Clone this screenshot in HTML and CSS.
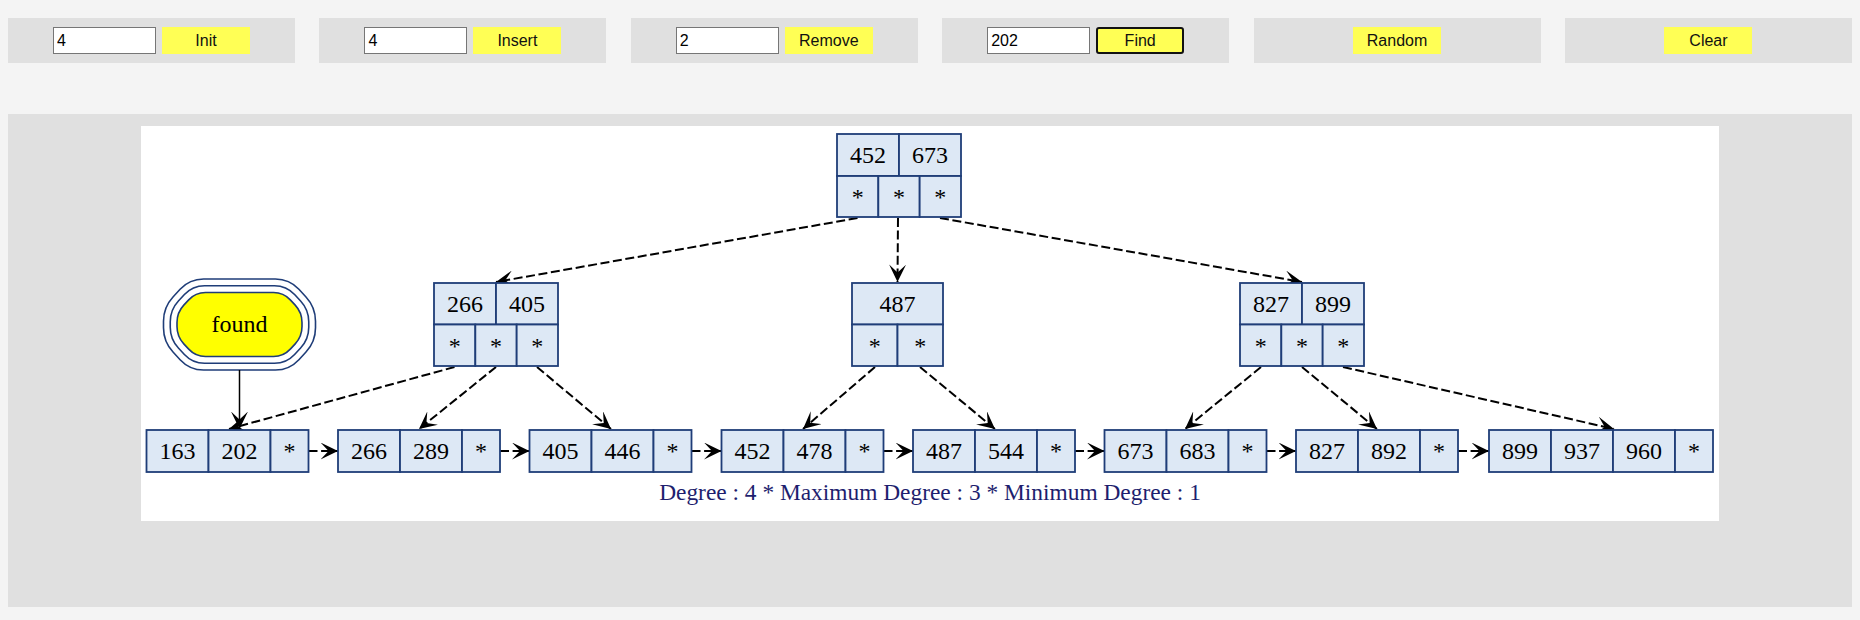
FILE: index.html
```html
<!DOCTYPE html>
<html lang="en">
<head>
    <meta charset="UTF-8">
    <meta name="viewport" content="width=device-width, initial-scale=1.0">
    <title>B+ Tree</title>
    <link rel="stylesheet" href="styles.css">
</head>
<body>

    <div class="toolbar">
        <div class="panel">
            <input type="text" value="4">
            <button>Init</button>
        </div>
        <div class="panel">
            <input type="text" value="4">
            <button>Insert</button>
        </div>
        <div class="panel">
            <input type="text" value="2">
            <button>Remove</button>
        </div>
        <div class="panel">
            <input type="text" value="202">
            <button class="active">Find</button>
        </div>
        <div class="panel">
            <button>Random</button>
        </div>
        <div class="panel">
            <button>Clear</button>
        </div>
    </div>

    <div class="stage">
        <svg class="graph" width="1578" height="395" viewBox="141 126 1578 395">
            <defs>
                <marker id="vee" markerUnits="userSpaceOnUse" markerWidth="18" markerHeight="17" viewBox="0 0 18 17" refX="17.5" refY="8.5" orient="auto">
                    <path d="M0 0 L17.5 8.5 L0 17 L8 8.5 Z" fill="#000"/>
                </marker>
            </defs>

            <!-- edges: root -> inner nodes -->
            <path class="edge" d="M857.5 218 L496 282"/>
            <path class="edge" d="M898 218 L897.5 282"/>
            <path class="edge" d="M940 218 L1302 282"/>

            <!-- edges: inner nodes -> leaves -->
            <path class="edge" d="M454.5 367 L229 429"/>
            <path class="edge" d="M496 367 L419 429"/>
            <path class="edge" d="M537 367 L611 429"/>
            <path class="edge" d="M875 367 L803 429"/>
            <path class="edge" d="M920 367 L995 429"/>
            <path class="edge" d="M1261 367 L1185 429"/>
            <path class="edge" d="M1302 367 L1377 429"/>
            <path class="edge" d="M1343 367 L1614 429"/>

            <!-- edges: leaf chain -->
            <path class="edge" d="M308.5 451 L338 451"/>
            <path class="edge" d="M500 451 L529.5 451"/>
            <path class="edge" d="M691.5 451 L721.5 451"/>
            <path class="edge" d="M883.5 451 L913 451"/>
            <path class="edge" d="M1075 451 L1104.5 451"/>
            <path class="edge" d="M1266.5 451 L1296 451"/>
            <path class="edge" d="M1458 451 L1489 451"/>

            <!-- found marker -->
            <g class="found" transform="translate(239.5 324.5)">
                <path d="M-35.9,-45.5 L35.9,-45.5 Q49.9,-45.5 59.41,-35.22 L66.49,-27.57 Q76,-17.29 76,-3.29 L76,3.29 Q76,17.29 66.49,27.57 L59.41,35.22 Q49.9,45.5 35.9,45.5 L-35.9,45.5 Q-49.9,45.5 -59.41,35.22 L-66.49,27.57 Q-76,17.29 -76,3.29 L-76,-3.29 Q-76,-17.29 -66.49,-27.57 L-59.41,-35.22 Q-49.9,-45.5 -35.9,-45.5 Z"/>
                <path d="M-34.94,-38.75 L34.94,-38.75 Q46.94,-38.75 55.09,-29.94 L61.1,-23.44 Q69.25,-14.63 69.25,-2.63 L69.25,2.63 Q69.25,14.63 61.1,23.44 L55.09,29.94 Q46.94,38.75 34.94,38.75 L-34.94,38.75 Q-46.94,38.75 -55.09,29.94 L-61.1,23.44 Q-69.25,14.63 -69.25,2.63 L-69.25,-2.63 Q-69.25,-14.63 -61.1,-23.44 L-55.09,-29.94 Q-46.94,-38.75 -34.94,-38.75 Z"/>
                <path class="hit" d="M-34,-32 L34,-32 Q44,-32 50.79,-24.66 L55.71,-19.34 Q62.5,-12 62.5,-2 L62.5,2 Q62.5,12 55.71,19.34 L50.79,24.66 Q44,32 34,32 L-34,32 Q-44,32 -50.79,24.66 L-55.71,19.34 Q-62.5,12 -62.5,2 L-62.5,-2 Q-62.5,-12 -55.71,-19.34 L-50.79,-24.66 Q-44,-32 -34,-32 Z"/>
                <text x="0" y="7.5">found</text>
            </g>
            <path class="link" d="M239.5 370 L239.5 429"/>

            <!-- root -->
            <g class="node">
                <rect x="837" y="134" width="62" height="42"/>
                <rect x="899" y="134" width="62" height="42"/>
                <rect x="837" y="176" width="41.33" height="41"/>
                <rect x="878.33" y="176" width="41.33" height="41"/>
                <rect x="919.67" y="176" width="41.33" height="41"/>
                <text x="868" y="163.4">452</text>
                <text x="930" y="163.4">673</text>
                <text x="857.7" y="205">*</text>
                <text x="899" y="205">*</text>
                <text x="940.3" y="205">*</text>
            </g>

            <!-- inner: 266 405 -->
            <g class="node">
                <rect x="434" y="283" width="62" height="41.5"/>
                <rect x="496" y="283" width="62" height="41.5"/>
                <rect x="434" y="324.5" width="41.33" height="41.5"/>
                <rect x="475.33" y="324.5" width="41.33" height="41.5"/>
                <rect x="516.67" y="324.5" width="41.33" height="41.5"/>
                <text x="465" y="312.2">266</text>
                <text x="527" y="312.2">405</text>
                <text x="454.7" y="353.5">*</text>
                <text x="496" y="353.5">*</text>
                <text x="537.3" y="353.5">*</text>
            </g>

            <!-- inner: 487 -->
            <g class="node">
                <rect x="852" y="283" width="91" height="41.5"/>
                <rect x="852" y="324.5" width="45.5" height="41.5"/>
                <rect x="897.5" y="324.5" width="45.5" height="41.5"/>
                <text x="897.5" y="312.2">487</text>
                <text x="874.75" y="353.5">*</text>
                <text x="920.25" y="353.5">*</text>
            </g>

            <!-- inner: 827 899 -->
            <g class="node">
                <rect x="1240" y="283" width="62" height="41.5"/>
                <rect x="1302" y="283" width="62" height="41.5"/>
                <rect x="1240" y="324.5" width="41.33" height="41.5"/>
                <rect x="1281.33" y="324.5" width="41.33" height="41.5"/>
                <rect x="1322.67" y="324.5" width="41.33" height="41.5"/>
                <text x="1271" y="312.2">827</text>
                <text x="1333" y="312.2">899</text>
                <text x="1260.7" y="353.5">*</text>
                <text x="1302" y="353.5">*</text>
                <text x="1343.3" y="353.5">*</text>
            </g>

            <!-- leaves -->
            <g class="node">
                <rect x="146.5" y="430" width="62" height="42"/>
                <rect x="208.5" y="430" width="62" height="42"/>
                <rect x="270.5" y="430" width="38" height="42"/>
                <text x="177.5" y="459.4">163</text>
                <text x="239.5" y="459.4">202</text>
                <text x="289.5" y="459.4">*</text>
            </g>
            <g class="node">
                <rect x="338" y="430" width="62" height="42"/>
                <rect x="400" y="430" width="62" height="42"/>
                <rect x="462" y="430" width="38" height="42"/>
                <text x="369" y="459.4">266</text>
                <text x="431" y="459.4">289</text>
                <text x="481" y="459.4">*</text>
            </g>
            <g class="node">
                <rect x="529.5" y="430" width="62" height="42"/>
                <rect x="591.5" y="430" width="62" height="42"/>
                <rect x="653.5" y="430" width="38" height="42"/>
                <text x="560.5" y="459.4">405</text>
                <text x="622.5" y="459.4">446</text>
                <text x="672.5" y="459.4">*</text>
            </g>
            <g class="node">
                <rect x="721.5" y="430" width="62" height="42"/>
                <rect x="783.5" y="430" width="62" height="42"/>
                <rect x="845.5" y="430" width="38" height="42"/>
                <text x="752.5" y="459.4">452</text>
                <text x="814.5" y="459.4">478</text>
                <text x="864.5" y="459.4">*</text>
            </g>
            <g class="node">
                <rect x="913" y="430" width="62" height="42"/>
                <rect x="975" y="430" width="62" height="42"/>
                <rect x="1037" y="430" width="38" height="42"/>
                <text x="944" y="459.4">487</text>
                <text x="1006" y="459.4">544</text>
                <text x="1056" y="459.4">*</text>
            </g>
            <g class="node">
                <rect x="1104.5" y="430" width="62" height="42"/>
                <rect x="1166.5" y="430" width="62" height="42"/>
                <rect x="1228.5" y="430" width="38" height="42"/>
                <text x="1135.5" y="459.4">673</text>
                <text x="1197.5" y="459.4">683</text>
                <text x="1247.5" y="459.4">*</text>
            </g>
            <g class="node">
                <rect x="1296" y="430" width="62" height="42"/>
                <rect x="1358" y="430" width="62" height="42"/>
                <rect x="1420" y="430" width="38" height="42"/>
                <text x="1327" y="459.4">827</text>
                <text x="1389" y="459.4">892</text>
                <text x="1439" y="459.4">*</text>
            </g>
            <g class="node">
                <rect x="1489" y="430" width="62" height="42"/>
                <rect x="1551" y="430" width="62" height="42"/>
                <rect x="1613" y="430" width="62" height="42"/>
                <rect x="1675" y="430" width="38" height="42"/>
                <text x="1520" y="459.4">899</text>
                <text x="1582" y="459.4">937</text>
                <text x="1644" y="459.4">960</text>
                <text x="1694" y="459.4">*</text>
            </g>

            <text class="caption" x="930" y="500">Degree : 4 * Maximum Degree : 3 * Minimum Degree : 1</text>
        </svg>
    </div>

</body>
</html>
```

FILE: styles.css
```css
body {
    font-family: "Liberation Sans", Arial, sans-serif;
    background-color: #f4f4f4;
    margin: 8px;
}

.toolbar {
    display: flex;
    justify-content: space-between;
    margin-top: 10px;
}

.panel {
    width: 287px;
    height: 45px;
    background-color: #e0e0e0;
    display: flex;
    align-items: center;
    justify-content: center;
    gap: 6px;
}

.panel input {
    width: 103px;
    height: 27px;
    box-sizing: border-box;
    border: 1px solid #767676;
    padding: 0 3px;
    font-family: "Liberation Sans", Arial, sans-serif;
    font-size: 16px;
    color: #000;
    background: #fff;
}

.panel button {
    width: 88px;
    height: 27px;
    border: none;
    background-color: #ffff55;
    font-family: "Liberation Sans", Arial, sans-serif;
    font-size: 16px;
    color: #111;
    cursor: pointer;
}

.panel button.active {
    border: 2px solid #111;
    border-radius: 3px;
}

.stage {
    margin-top: 51px;
    height: 493px;
    box-sizing: border-box;
    padding-top: 12px;
    background-color: #e0e0e0;
    display: flex;
    justify-content: center;
    align-items: flex-start;
}

.graph {
    display: block;
    background-color: #fff;
    font-family: "Liberation Serif", "Times New Roman", serif;
    font-size: 24px;
}

.graph text {
    text-anchor: middle;
    fill: #000;
}

.node rect {
    fill: #dde8f5;
    stroke: #1f3d78;
    stroke-width: 1.8;
}

.edge {
    fill: none;
    stroke: #000;
    stroke-width: 2;
    stroke-dasharray: 9 3.6;
    marker-end: url(#vee);
}

.link {
    fill: none;
    stroke: #000;
    stroke-width: 1.5;
    marker-end: url(#vee);
}

.found path {
    fill: none;
    stroke: #1f3d78;
    stroke-width: 1.6;
}

.found path.hit {
    fill: #ffff00;
}

.graph .caption {
    font-size: 23.4px;
    fill: #1e1e6e;
}
```
